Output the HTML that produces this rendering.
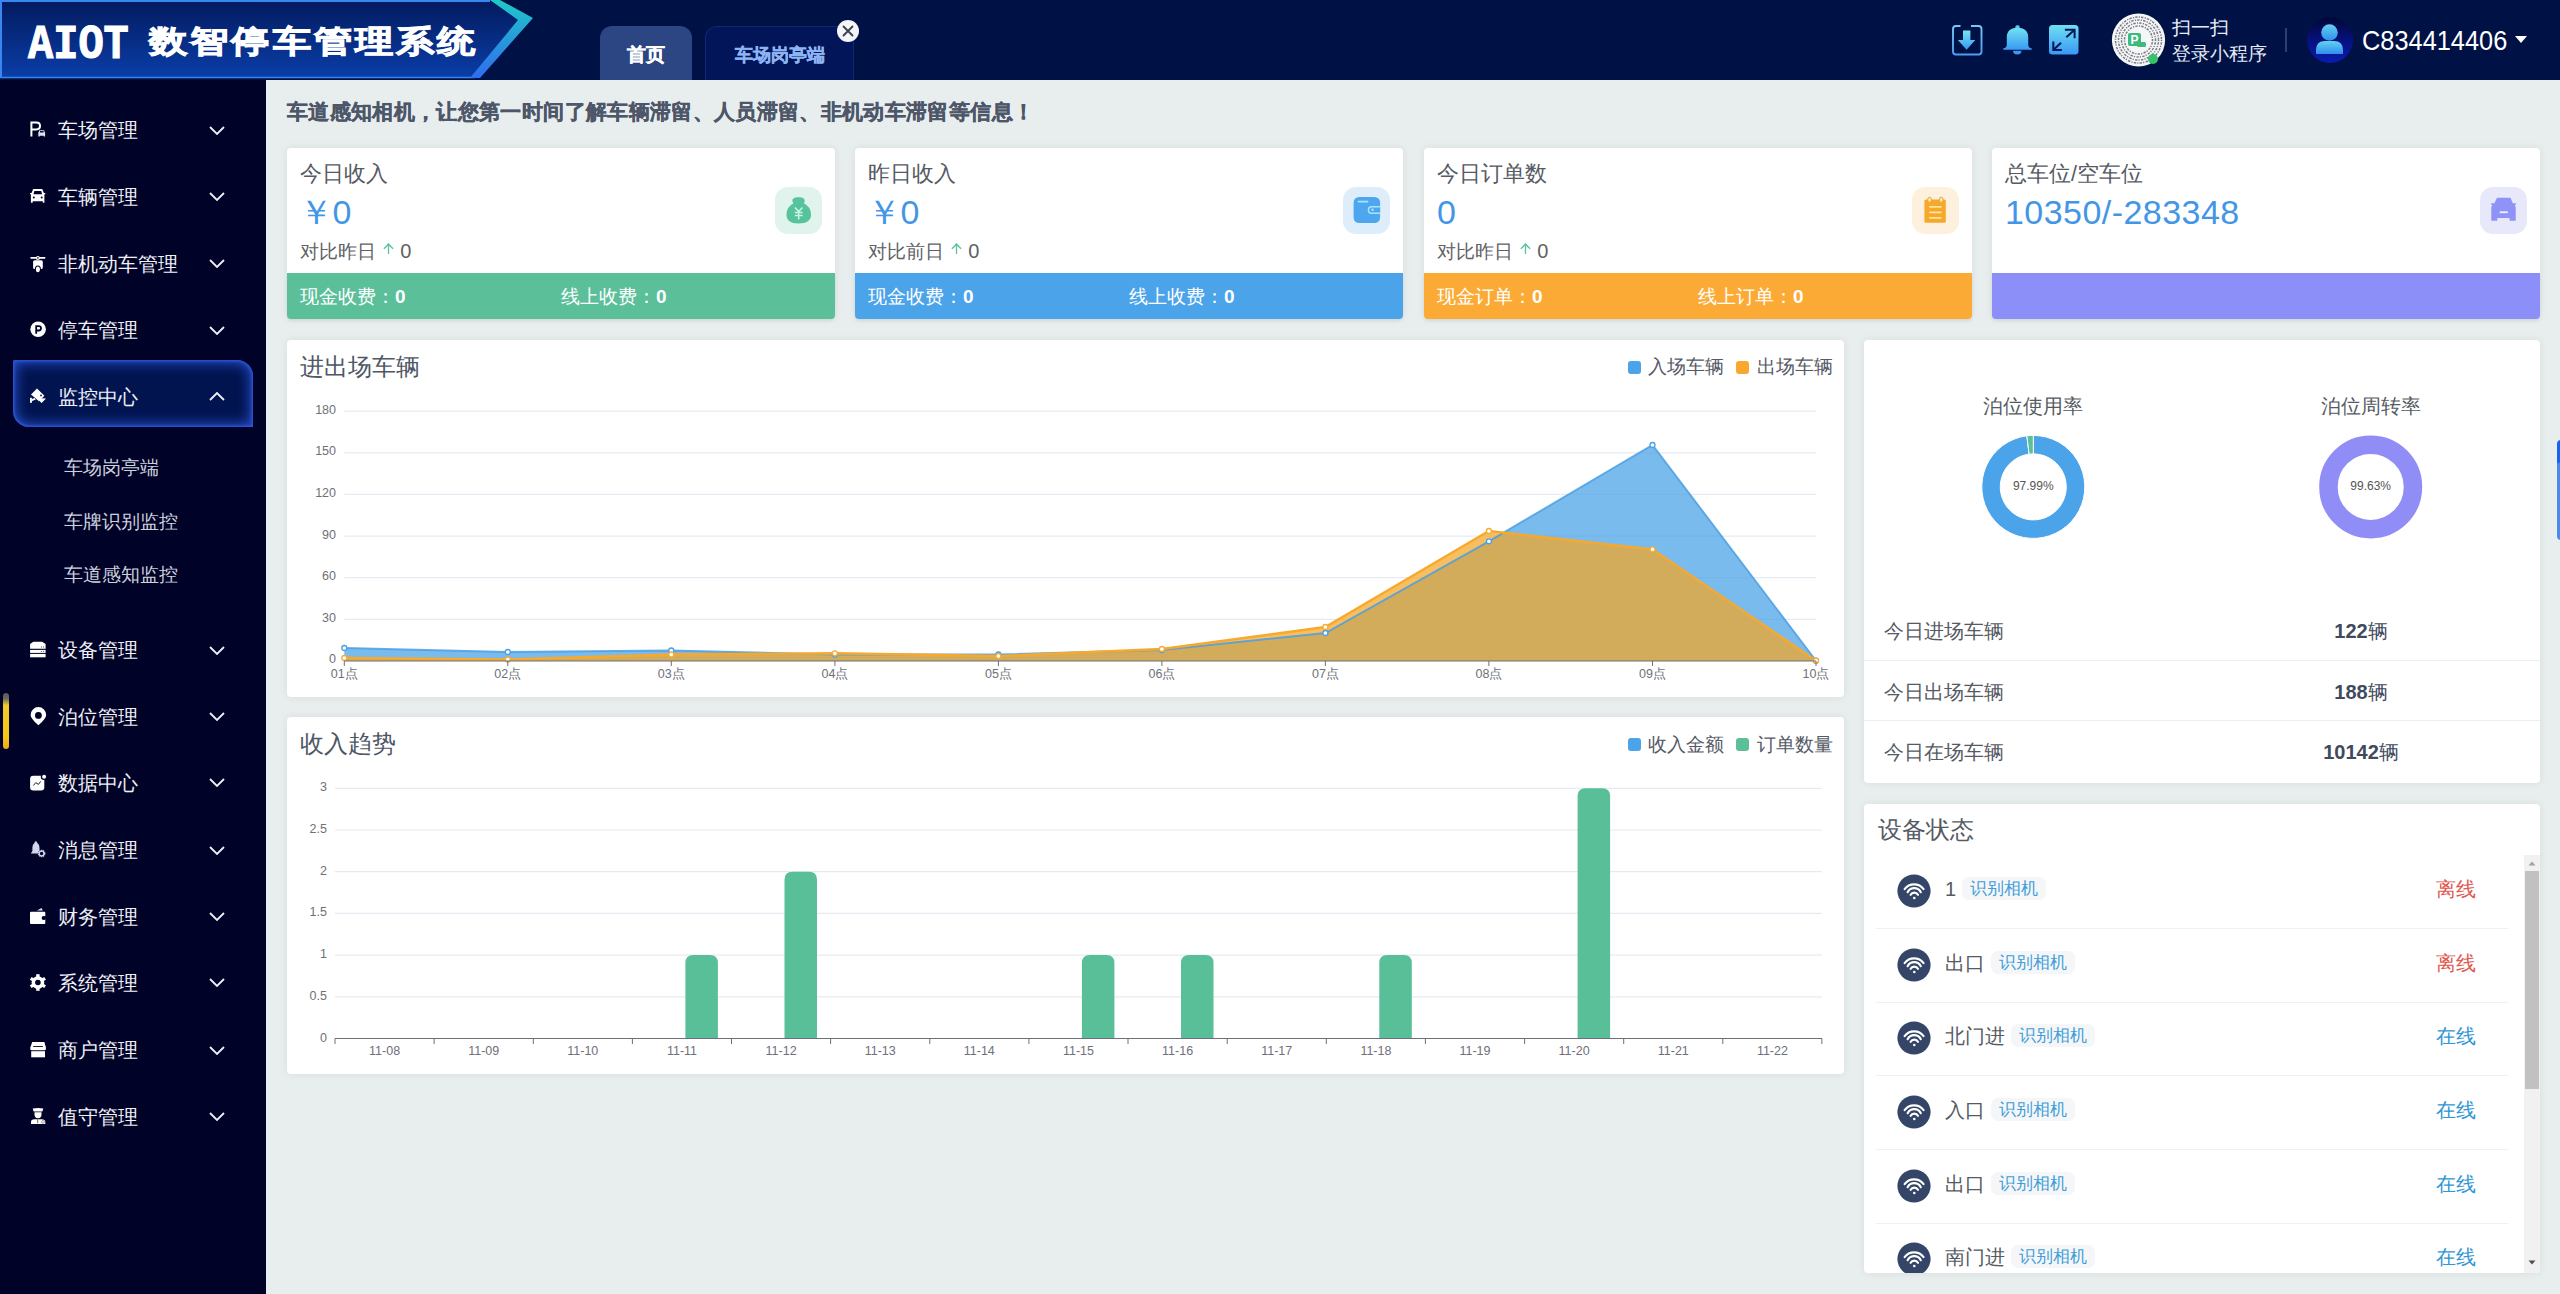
<!DOCTYPE html>
<html><head><meta charset="utf-8">
<style>
*{box-sizing:border-box;margin:0;padding:0}
html,body{width:2560px;height:1294px;overflow:hidden}
body{background:#e8edee;font-family:"Liberation Sans",sans-serif;position:relative;color:#555}
.abs{position:absolute}
#hdr{position:absolute;left:0;top:0;width:2560px;height:80px;background:#001145}
#side{position:absolute;left:0;top:80px;width:266px;height:1214px;background:#000227;box-shadow:1px 0 0 #e4eef6}
.mi{position:absolute;left:0;width:267px;height:40px;color:#eef0f6;font-size:20px;line-height:40px}
.mi .ic{position:absolute;left:30px;top:12px;width:16px;height:16px}
.mi .tx{position:absolute;left:58px;top:0}
.mi .ch{position:absolute;left:209px;top:15px;width:16px;height:9px}
.sub{position:absolute;left:64px;color:#cfd3df;font-size:18.5px;line-height:30px}
.card{position:absolute;background:#fff;border-radius:4px;box-shadow:0 0 8px rgba(0,0,0,.07)}
</style></head><body>
<div id="hdr">
  <svg class="abs" style="left:0;top:0" width="540" height="80" viewBox="0 0 540 80">
    <defs>
      <linearGradient id="lg1" x1="0" y1="0" x2="0" y2="1">
        <stop offset="0" stop-color="#031a5e"/><stop offset="1" stop-color="#0a3ea8"/>
      </linearGradient>
      <linearGradient id="lg2" x1="0" y1="0" x2="0" y2="1">
        <stop offset="0" stop-color="#1fc8c8"/><stop offset="1" stop-color="#2f6cf0"/>
      </linearGradient>
    </defs>
    <polygon points="0,0 492,0 532,18 474,78 0,78" fill="url(#lg1)"/>
    <polyline points="1,78 1,1 490,1" fill="none" stroke="#3a86f0" stroke-width="2"/>
    <line x1="0" y1="77.5" x2="475" y2="77.5" stroke="#3a86f0" stroke-width="1.5"/>
    <polygon points="490,0 500,0 533,18 480,78 470,78 518,20" fill="url(#lg2)"/>
  </svg>
  <div class="abs" style="left:28px;top:18px;color:#fff;font-family:'Liberation Mono',monospace;font-size:42px;font-weight:700;line-height:48px;white-space:nowrap;-webkit-text-stroke:1px #fff;transform:scale(1,1.15);transform-origin:0 0">AIOT</div>
  <div class="abs" style="left:149px;top:22px;color:#fff;font-size:38px;font-weight:900;line-height:48px;letter-spacing:3.2px;white-space:nowrap;-webkit-text-stroke:1.2px #fff;transform:scaleY(0.81);transform-origin:0 0">数智停车管理系统</div>

  <!-- tabs -->
  <div class="abs" style="left:600px;top:26px;width:92px;height:54px;background:#2b4682;border-radius:12px 12px 0 0"></div>
  <div class="abs" style="left:600px;top:26px;width:92px;height:54px;line-height:58px;text-align:center;color:#fff;font-size:18.5px;font-weight:700;-webkit-text-stroke:0.4px #fff">首页</div>
  <div class="abs" style="left:705px;top:26px;width:149px;height:54px;background:#021558;border:1px solid #0c2a78;border-bottom:none;border-radius:12px 12px 0 0"></div>
  <div class="abs" style="left:705px;top:26px;width:149px;height:54px;line-height:58px;text-align:center;color:#8db4f2;font-size:18px;font-weight:700;-webkit-text-stroke:0.3px #8db4f2">车场岗亭端</div>
  <svg class="abs" style="left:836px;top:19px" width="24" height="24" viewBox="0 0 24 24"><circle cx="12" cy="12" r="11" fill="#f4f5f8"/><path d="M7.5 7.5L16.5 16.5M16.5 7.5L7.5 16.5" stroke="#3a3f4a" stroke-width="1.8" stroke-linecap="round"/></svg>
  <!-- right icons -->
  <svg class="abs" style="left:1950px;top:23px" width="34" height="34" viewBox="0 0 34 34">
    <defs><linearGradient id="gi" x1="0" y1="0" x2="0" y2="1"><stop offset="0" stop-color="#72e4f2"/><stop offset="1" stop-color="#3b98f3"/></linearGradient>
    <linearGradient id="gf" x1="0" y1="0" x2="0" y2="1"><stop offset="0" stop-color="#78c8f6"/><stop offset="1" stop-color="#4aa0f0"/></linearGradient></defs>
    <path d="M10.5 3H6Q3 3 3 6V28.5Q3 31.5 6 31.5H28.5Q31.5 31.5 31.5 28.5V6Q31.5 3 28.5 3H21" fill="none" stroke="url(#gf)" stroke-width="1.9"/>
    <path d="M13 7.6H20.4V16.9H25.3L16.6 26.7L7.8 16.9H13Z" fill="url(#gi)"/>
  </svg>
  <svg class="abs" style="left:2003px;top:25px" width="30" height="31" viewBox="0 0 30 31">
    <defs><linearGradient id="gb" x1="0" y1="0" x2="0" y2="1"><stop offset="0" stop-color="#72e2f2"/><stop offset="1" stop-color="#3a98f3"/></linearGradient></defs>
    <circle cx="14.5" cy="2.6" r="2.3" fill="url(#gb)"/>
    <path d="M3.8 12C3.8 5.8 8.3 2.8 14.5 2.8C20.7 2.8 25.2 5.8 25.2 12V19.5Q25.2 23 28.8 23.6V24.8H0.2V23.6Q3.8 23 3.8 19.5Z" fill="url(#gb)"/>
    <path d="M10 25.8H18.5Q18.5 29.4 14.25 29.4Q10 29.4 10 25.8Z" fill="#3a98f3"/>
  </svg>
  <svg class="abs" style="left:2049px;top:25px" width="30" height="30" viewBox="0 0 30 30">
    <defs><linearGradient id="ge" x1="0" y1="0" x2="0" y2="1"><stop offset="0" stop-color="#6ee0f0"/><stop offset="1" stop-color="#3a98f5"/></linearGradient></defs>
    <rect x="0" y="0" width="29.5" height="29.5" rx="3.5" fill="url(#ge)"/>
    <path d="M15.9 4.65H25.6V13.2M25.6 4.65L17.3 12.3M4.3 16.4V25.1H12.9M4.3 25.1L12 17.8" fill="none" stroke="#06185a" stroke-width="2"/>
  </svg>
  <!-- qr -->
  <svg class="abs" style="left:2111px;top:13px" width="55" height="55" viewBox="0 0 55 55">
    <circle cx="27.5" cy="27" r="26.6" fill="#f5f6f8"/>
    <g stroke="#5a5f66" stroke-width="1.5" stroke-dasharray="1.2 1.1 2.4 1.3" fill="none" opacity=".8">
      <circle cx="27.5" cy="27" r="23"/><circle cx="27.5" cy="27" r="20"/><circle cx="27.5" cy="27" r="17"/><circle cx="27.5" cy="27" r="14"/>
    </g>
    <circle cx="27.5" cy="27" r="11" fill="#f5f6f8"/>
    <rect x="17" y="20" width="13" height="13" rx="2" fill="#3fba7f"/>
    <text x="19.5" y="31" font-size="12" font-weight="700" fill="#fff" font-family="Liberation Sans">P</text>
    <rect x="26" y="29" width="9" height="5" rx="1.5" fill="#3fba7f"/>
    <circle cx="42" cy="46" r="5" fill="#36c46a"/>
  </svg>
  <div class="abs" style="left:2172px;top:15px;color:#e6ebf7;font-size:19px;line-height:26px;white-space:nowrap">扫一扫<br>登录小程序</div>
  <div class="abs" style="left:2285px;top:28px;width:2px;height:24px;background:#2f3f6e"></div>
  <svg class="abs" style="left:2307px;top:17px" width="46" height="46" viewBox="0 0 46 46">
    <defs><linearGradient id="ga" x1="0" y1="0" x2="0" y2="1"><stop offset="0" stop-color="#020734"/><stop offset=".55" stop-color="#061283"/><stop offset="1" stop-color="#0a1cae"/></linearGradient>
    <linearGradient id="gp" x1="0" y1="0" x2="0" y2="1"><stop offset="0" stop-color="#64d0ee"/><stop offset="1" stop-color="#2f8ef0"/></linearGradient></defs>
    <circle cx="23" cy="23" r="23" fill="url(#ga)"/>
    <circle cx="22.5" cy="15.5" r="8.3" fill="url(#gp)"/>
    <path d="M9 37V33Q9 24 18 24H27Q36 24 36 33V37Z" fill="url(#gp)"/>
  </svg>
  <div class="abs" style="left:2362px;top:19.5px;color:#fff;font-size:28.5px;line-height:40px;white-space:nowrap;transform:scaleX(0.89);transform-origin:0 0">C834414406</div>
  <svg class="abs" style="left:2514px;top:35px" width="14" height="9" viewBox="0 0 14 9"><path d="M1 1H13L7 8Z" fill="#fff"/></svg>
</div>
<div id="side"></div>
<div class="abs" style="left:13px;top:360px;width:240px;height:67px;background:#021450;border-radius:2px 16px 0 16px;box-shadow:inset 0 0 14px 2px #2a55d8, inset 0 0 3px 1px #3a66e8"></div>
<svg class="abs" style="left:24px;top:118px" width="30" height="24" viewBox="0 0 30 24"><path d="M7.4 18.5V4.6H12.3Q16 4.6 16 8Q16 11.4 12.3 11.4H7.4" fill="none" stroke="#fff" stroke-width="2"/><path d="M15.4 12.2H19.9L21.1 14.6V18.5H19.7V17.7H15.8V18.5H14.3V14.6Z" fill="#dfe2f2"/><rect x="16" y="13.1" width="3.6" height="1.4" fill="#000227"/></svg>
<div class="abs" style="left:58px;top:115px;height:30px;line-height:30px;font-size:20px;color:#eef0f6;white-space:nowrap">车场管理</div>
<svg class="abs" style="left:209px;top:126px" width="16" height="9" viewBox="0 0 16 9"><path d="M1 1L8 8L15 1" fill="none" stroke="#eef0f6" stroke-width="1.8"/></svg>
<svg class="abs" style="left:24px;top:185px" width="30" height="24" viewBox="0 0 30 24"><path d="M9.2 3.9H18.2L19.9 7.9H21.3V9.2H20.4V17.8H18.8V16.2H8.7V17.8H6.9V9.2H6.1V7.9H7.5Z" fill="#fff"/><path d="M10.4 6.1H17.2L18.1 9.2H9.5Z" fill="#000227"/><circle cx="9.8" cy="12.4" r="1" fill="#000227"/><circle cx="17.7" cy="12.4" r="1" fill="#000227"/></svg>
<div class="abs" style="left:58px;top:182px;height:30px;line-height:30px;font-size:20px;color:#eef0f6;white-space:nowrap">车辆管理</div>
<svg class="abs" style="left:209px;top:192px" width="16" height="9" viewBox="0 0 16 9"><path d="M1 1L8 8L15 1" fill="none" stroke="#eef0f6" stroke-width="1.8"/></svg>
<svg class="abs" style="left:24px;top:251.5px" width="30" height="24" viewBox="0 0 30 24"><rect x="6.3" y="4.9" width="15.2" height="1.8" rx=".9" fill="#fff"/><circle cx="13.9" cy="5.9" r="2" fill="#fff"/><circle cx="13.9" cy="5.9" r=".8" fill="#000227"/><rect x="9.1" y="8.2" width="9.7" height="8.8" rx="1.6" fill="#fff"/><ellipse cx="13.9" cy="17" rx="3" ry="3.6" fill="#000227"/><ellipse cx="13.9" cy="17.3" rx="2" ry="2.9" fill="#fff"/></svg>
<div class="abs" style="left:58px;top:248.5px;height:30px;line-height:30px;font-size:20px;color:#eef0f6;white-space:nowrap">非机动车管理</div>
<svg class="abs" style="left:209px;top:259px" width="16" height="9" viewBox="0 0 16 9"><path d="M1 1L8 8L15 1" fill="none" stroke="#eef0f6" stroke-width="1.8"/></svg>
<svg class="abs" style="left:24px;top:318px" width="30" height="24" viewBox="0 0 30 24"><circle cx="14.1" cy="11.3" r="7.8" fill="#fff"/><path d="M12.2 15.7V8.1H14.8Q17 8.1 17 10.3Q17 12.5 14.8 12.5H12.2" fill="none" stroke="#000227" stroke-width="1.8"/></svg>
<div class="abs" style="left:58px;top:315px;height:30px;line-height:30px;font-size:20px;color:#eef0f6;white-space:nowrap">停车管理</div>
<svg class="abs" style="left:209px;top:326px" width="16" height="9" viewBox="0 0 16 9"><path d="M1 1L8 8L15 1" fill="none" stroke="#eef0f6" stroke-width="1.8"/></svg>
<svg class="abs" style="left:24px;top:385px" width="30" height="24" viewBox="0 0 30 24"><path d="M13 3.4L20.4 10.7L15 16.2L7 9.6Z" fill="#fff"/><path d="M16.6 13.2L22 13.5L17.6 18L15 15.6Z" fill="#fff"/><rect x="6" y="12.8" width="1.9" height="5" fill="#fff"/><path d="M7.5 14.3L10.4 12.9L11.8 14.6L7.5 16.2Z" fill="#fff"/><circle cx="17" cy="10.4" r=".9" fill="#041652"/></svg>
<div class="abs" style="left:58px;top:382px;height:30px;line-height:30px;font-size:20px;color:#eef0f6;white-space:nowrap">监控中心</div>
<svg class="abs" style="left:209px;top:392px" width="16" height="9" viewBox="0 0 16 9"><path d="M1 8L8 1L15 8" fill="none" stroke="#eef0f6" stroke-width="1.8"/></svg>
<svg class="abs" style="left:24px;top:638px" width="30" height="24" viewBox="0 0 30 24"><path d="M9.3 3.7H18.1L21.6 5.9V10.7H6.1V5.9Z" fill="#fff"/><rect x="6.1" y="11.9" width="15.5" height="3" fill="#fff"/><rect x="6.1" y="15.9" width="15.5" height="3.4" fill="#fff"/><rect x="17" y="8" width=".8" height="2" fill="#999"/><rect x="19" y="8" width=".8" height="2" fill="#999"/><circle cx="17.4" cy="13.4" r=".5" fill="#333"/><circle cx="19.5" cy="13.4" r=".5" fill="#333"/></svg>
<div class="abs" style="left:58px;top:635px;height:30px;line-height:30px;font-size:20px;color:#eef0f6;white-space:nowrap">设备管理</div>
<svg class="abs" style="left:209px;top:646px" width="16" height="9" viewBox="0 0 16 9"><path d="M1 1L8 8L15 1" fill="none" stroke="#eef0f6" stroke-width="1.8"/></svg>
<svg class="abs" style="left:24px;top:705px" width="30" height="24" viewBox="0 0 30 24"><path d="M14.4 20.3Q6.6 13.4 6.6 9.9A7.8 7.8 0 0 1 22.2 9.9Q22.2 13.4 14.4 20.3Z" fill="#fff"/><circle cx="14.4" cy="10.4" r="3.4" fill="#000227"/></svg>
<div class="abs" style="left:58px;top:702px;height:30px;line-height:30px;font-size:20px;color:#eef0f6;white-space:nowrap">泊位管理</div>
<svg class="abs" style="left:209px;top:712px" width="16" height="9" viewBox="0 0 16 9"><path d="M1 1L8 8L15 1" fill="none" stroke="#eef0f6" stroke-width="1.8"/></svg>
<svg class="abs" style="left:24px;top:771px" width="30" height="24" viewBox="0 0 30 24"><rect x="6.1" y="4.8" width="14.2" height="14.6" rx="3.2" fill="#fff"/><circle cx="20.1" cy="5.8" r="3.3" fill="#000227"/><circle cx="20.1" cy="5.8" r="2" fill="#fff"/><path d="M9.4 14.5L11.8 11.6L14.4 13.4L16.7 10.4" fill="none" stroke="#222" stroke-width="1"/></svg>
<div class="abs" style="left:58px;top:768px;height:30px;line-height:30px;font-size:20px;color:#eef0f6;white-space:nowrap">数据中心</div>
<svg class="abs" style="left:209px;top:778px" width="16" height="9" viewBox="0 0 16 9"><path d="M1 1L8 8L15 1" fill="none" stroke="#eef0f6" stroke-width="1.8"/></svg>
<svg class="abs" style="left:24px;top:838px" width="30" height="24" viewBox="0 0 30 24"><path d="M11.8 3.2Q13.2 3.2 13.2 5Q15.5 6 15.5 10.5V13L16.6 15.6H6.8L8.4 13V9.5Q8.4 6 10.5 5Q10.5 3.2 11.8 3.2Z" fill="#d2d5ee"/><circle cx="17.6" cy="15.5" r="3.6" fill="#000227"/><circle cx="17.6" cy="15.5" r="3" fill="none" stroke="#d2d5ee" stroke-width="1.6" stroke-dasharray="1.3 .6"/><circle cx="17.6" cy="15.5" r="2.3" fill="none" stroke="#d2d5ee" stroke-width="1.2"/></svg>
<div class="abs" style="left:58px;top:835px;height:30px;line-height:30px;font-size:20px;color:#eef0f6;white-space:nowrap">消息管理</div>
<svg class="abs" style="left:209px;top:846px" width="16" height="9" viewBox="0 0 16 9"><path d="M1 1L8 8L15 1" fill="none" stroke="#eef0f6" stroke-width="1.8"/></svg>
<svg class="abs" style="left:24px;top:904.5px" width="30" height="24" viewBox="0 0 30 24"><rect x="6" y="6.7" width="15.3" height="12.3" rx="1" fill="#fff"/><circle cx="19.6" cy="12.9" r="2" fill="#000227"/><rect x="19.6" y="11.3" width="2.2" height="3.2" fill="#000227"/><path d="M13 5.6L17.5 3L18.8 5.6Z" fill="#dcdff5"/></svg>
<div class="abs" style="left:58px;top:901.5px;height:30px;line-height:30px;font-size:20px;color:#eef0f6;white-space:nowrap">财务管理</div>
<svg class="abs" style="left:209px;top:912px" width="16" height="9" viewBox="0 0 16 9"><path d="M1 1L8 8L15 1" fill="none" stroke="#eef0f6" stroke-width="1.8"/></svg>
<svg class="abs" style="left:24px;top:971px" width="30" height="24" viewBox="0 0 30 24"><g fill="#fff"><circle cx="13.9" cy="11.5" r="6.3"/><rect x="12.2" y="3.2" width="3.4" height="16.6"/><rect x="12.2" y="3.2" width="3.4" height="16.6" transform="rotate(60 13.9 11.5)"/><rect x="12.2" y="3.2" width="3.4" height="16.6" transform="rotate(120 13.9 11.5)"/></g><circle cx="13.9" cy="11.5" r="2.8" fill="#000227"/></svg>
<div class="abs" style="left:58px;top:968px;height:30px;line-height:30px;font-size:20px;color:#eef0f6;white-space:nowrap">系统管理</div>
<svg class="abs" style="left:209px;top:978px" width="16" height="9" viewBox="0 0 16 9"><path d="M1 1L8 8L15 1" fill="none" stroke="#eef0f6" stroke-width="1.8"/></svg>
<svg class="abs" style="left:24px;top:1038px" width="30" height="24" viewBox="0 0 30 24"><path d="M8.2 4H20.4L21.9 9.5V11.2Q21.9 12.3 20.4 12.3H7.8Q6.3 12.3 6.3 11.2V9.5Z" fill="#fff"/><rect x="9" y="8.1" width="10" height="1" rx=".5" fill="#222"/><rect x="7.2" y="13.2" width="13.8" height="6.1" fill="#fff"/></svg>
<div class="abs" style="left:58px;top:1035px;height:30px;line-height:30px;font-size:20px;color:#eef0f6;white-space:nowrap">商户管理</div>
<svg class="abs" style="left:209px;top:1046px" width="16" height="9" viewBox="0 0 16 9"><path d="M1 1L8 8L15 1" fill="none" stroke="#eef0f6" stroke-width="1.8"/></svg>
<svg class="abs" style="left:24px;top:1105px" width="30" height="24" viewBox="0 0 30 24"><path d="M8.7 3.6Q14 2.4 19.3 3.6L18.4 6.6H9.6Z" fill="#fff"/><path d="M10.5 7.2H17.5V9.5Q17.5 13.2 14 13.2Q10.5 13.2 10.5 9.5Z" fill="#fff"/><path d="M7 19V17Q7 14.2 10.5 14.2H17.5Q21.3 14.2 21.3 17V19Z" fill="#fff"/><rect x="13.3" y="14.2" width=".9" height="4" fill="#555"/><circle cx="19" cy="16.9" r="1.4" fill="none" stroke="#666" stroke-width=".6"/></svg>
<div class="abs" style="left:58px;top:1102px;height:30px;line-height:30px;font-size:20px;color:#eef0f6;white-space:nowrap">值守管理</div>
<svg class="abs" style="left:209px;top:1112px" width="16" height="9" viewBox="0 0 16 9"><path d="M1 1L8 8L15 1" fill="none" stroke="#eef0f6" stroke-width="1.8"/></svg>
<div class="abs" style="left:64px;top:453px;height:30px;line-height:30px;font-size:18.5px;color:#cdd1de;white-space:nowrap">车场岗亭端</div>
<div class="abs" style="left:64px;top:507px;height:30px;line-height:30px;font-size:18.5px;color:#cdd1de;white-space:nowrap">车牌识别监控</div>
<div class="abs" style="left:64px;top:560px;height:30px;line-height:30px;font-size:18.5px;color:#cdd1de;white-space:nowrap">车道感知监控</div>
<div class="abs" style="left:3px;top:693px;width:6px;height:56px;border-radius:3px;background:linear-gradient(#55585f 0,#6a6a60 10%,#f3c92a 22%,#f5c518 80%,#f0a820 100%)"></div>
<div class="abs" style="left:287px;top:97px;height:30px;line-height:30px;font-size:21px;font-weight:700;color:#4d5769;letter-spacing:0.35px;-webkit-text-stroke:0.35px #4d5769;white-space:nowrap">车道感知相机，让您第一时间了解车辆滞留、人员滞留、非机动车滞留等信息！</div>
<div class="card" style="left:287px;top:148px;width:548px;height:171px"></div>
<div class="abs" style="left:300px;top:159px;line-height:30px;font-size:21.5px;color:#555a63;white-space:nowrap">今日收入</div>
<div class="abs" style="left:298.5px;top:190px;line-height:44px;font-size:34px;color:#4396e6;white-space:nowrap">￥0</div>
<div class="abs" style="left:300px;top:237px;line-height:28px;font-size:18.5px;color:#606266;white-space:nowrap">对比昨日 <svg width="11" height="12" viewBox="0 0 11 12" style="vertical-align:3px;margin:0 1px 0 2px"><path d="M5.5 11V2" stroke="#5cc49c" stroke-width="1.3"/><path d="M0.8 5.8Q3.5 3.5 5.5 1Q7.5 3.5 10.2 5.8" fill="none" stroke="#5cc49c" stroke-width="1.4"/></svg> <span style="font-size:20px">0</span></div>
<div class="abs" style="left:287px;top:273px;width:548px;height:46px;background:#5bbf9a;border-radius:0 0 4px 4px;box-shadow:0 2px 3px rgba(0,0,0,.06)"></div>
<div class="abs" style="left:300px;top:282px;line-height:30px;font-size:19px;color:#fff;white-space:nowrap">现金收费：<b>0</b></div>
<div class="abs" style="left:561px;top:282px;line-height:30px;font-size:19px;color:#fff;white-space:nowrap">线上收费：<b>0</b></div>
<svg class="abs" style="left:775px;top:187px" width="47" height="47" viewBox="0 0 47 47"><rect x="0" y="0" width="47" height="47" rx="13" fill="#e0f3ec"/><path d="M17.5 12.5Q19 9.8 23.5 10.3Q28 9.8 29.5 12.5Q30.5 14.5 28.8 16.3Q36 20 36 27.5Q36 36.5 23.5 36.5Q11.5 36.5 11.5 27.5Q11.5 20 18.5 16.3Q16.8 14.5 17.5 12.5Z" fill="#56c39c"/><path d="M20 20.5L23.7 24.6L27.4 20.5M19.8 25.5H27.6M19.8 28.5H27.6M23.7 24.6V32.5" fill="none" stroke="#c8f7e6" stroke-width="1.5"/></svg>
<div class="card" style="left:855px;top:148px;width:548px;height:171px"></div>
<div class="abs" style="left:868px;top:159px;line-height:30px;font-size:21.5px;color:#555a63;white-space:nowrap">昨日收入</div>
<div class="abs" style="left:866.5px;top:190px;line-height:44px;font-size:34px;color:#4396e6;white-space:nowrap">￥0</div>
<div class="abs" style="left:868px;top:237px;line-height:28px;font-size:18.5px;color:#606266;white-space:nowrap">对比前日 <svg width="11" height="12" viewBox="0 0 11 12" style="vertical-align:3px;margin:0 1px 0 2px"><path d="M5.5 11V2" stroke="#5cc49c" stroke-width="1.3"/><path d="M0.8 5.8Q3.5 3.5 5.5 1Q7.5 3.5 10.2 5.8" fill="none" stroke="#5cc49c" stroke-width="1.4"/></svg> <span style="font-size:20px">0</span></div>
<div class="abs" style="left:855px;top:273px;width:548px;height:46px;background:#4ba3ea;border-radius:0 0 4px 4px;box-shadow:0 2px 3px rgba(0,0,0,.06)"></div>
<div class="abs" style="left:868px;top:282px;line-height:30px;font-size:19px;color:#fff;white-space:nowrap">现金收费：<b>0</b></div>
<div class="abs" style="left:1129px;top:282px;line-height:30px;font-size:19px;color:#fff;white-space:nowrap">线上收费：<b>0</b></div>
<svg class="abs" style="left:1343px;top:187px" width="47" height="47" viewBox="0 0 47 47"><rect x="0" y="0" width="47" height="47" rx="13" fill="#ddeefa"/><rect x="10.6" y="10" width="26.5" height="26" rx="5.5" fill="#4ea6ee"/><rect x="14.6" y="13.8" width="10.8" height="1.6" rx=".8" fill="#a9e4ff"/><path d="M37.1 19.7H28.4Q25.4 19.7 25.4 22.95Q25.4 26.2 28.4 26.2H37.1" fill="#4ea6ee" stroke="#a9e4ff" stroke-width="1.4"/><circle cx="29.5" cy="22.8" r="1.2" fill="#a9e4ff"/></svg>
<div class="card" style="left:1424px;top:148px;width:548px;height:171px"></div>
<div class="abs" style="left:1437px;top:159px;line-height:30px;font-size:21.5px;color:#555a63;white-space:nowrap">今日订单数</div>
<div class="abs" style="left:1437px;top:190px;line-height:44px;font-size:34px;color:#4396e6;white-space:nowrap">0</div>
<div class="abs" style="left:1437px;top:237px;line-height:28px;font-size:18.5px;color:#606266;white-space:nowrap">对比昨日 <svg width="11" height="12" viewBox="0 0 11 12" style="vertical-align:3px;margin:0 1px 0 2px"><path d="M5.5 11V2" stroke="#5cc49c" stroke-width="1.3"/><path d="M0.8 5.8Q3.5 3.5 5.5 1Q7.5 3.5 10.2 5.8" fill="none" stroke="#5cc49c" stroke-width="1.4"/></svg> <span style="font-size:20px">0</span></div>
<div class="abs" style="left:1424px;top:273px;width:548px;height:46px;background:#fbab35;border-radius:0 0 4px 4px;box-shadow:0 2px 3px rgba(0,0,0,.06)"></div>
<div class="abs" style="left:1437px;top:282px;line-height:30px;font-size:19px;color:#fff;white-space:nowrap">现金订单：<b>0</b></div>
<div class="abs" style="left:1698px;top:282px;line-height:30px;font-size:19px;color:#fff;white-space:nowrap">线上订单：<b>0</b></div>
<svg class="abs" style="left:1912px;top:187px" width="47" height="47" viewBox="0 0 47 47"><rect x="0" y="0" width="47" height="47" rx="13" fill="#fdf0dc"/><rect x="12.4" y="12.5" width="21.4" height="23.2" rx="1.5" fill="#f6a82c"/><ellipse cx="17.6" cy="12.8" rx="2" ry="2.6" fill="#fbe6a6" stroke="#e9a23a" stroke-width=".9"/><ellipse cx="29.2" cy="12.8" rx="2" ry="2.6" fill="#fbe6a6" stroke="#e9a23a" stroke-width=".9"/><rect x="17" y="19" width="12.7" height="1.7" rx=".85" fill="#ffe49a"/><rect x="17" y="24.6" width="12.7" height="1.7" rx=".85" fill="#ffe49a"/><rect x="17" y="30" width="12.7" height="1.7" rx=".85" fill="#ffe49a"/></svg>
<div class="card" style="left:1992px;top:148px;width:548px;height:171px"></div>
<div class="abs" style="left:2005px;top:159px;line-height:30px;font-size:21.5px;color:#555a63;white-space:nowrap">总车位/空车位</div>
<div class="abs" style="left:2005px;top:190px;line-height:44px;font-size:34px;color:#4396e6;letter-spacing:0.45px;white-space:nowrap">10350/-283348</div>
<div class="abs" style="left:1992px;top:273px;width:548px;height:46px;background:#8b8ff7;border-radius:0 0 4px 4px;box-shadow:0 2px 3px rgba(0,0,0,.06)"></div>
<svg class="abs" style="left:2480px;top:187px" width="47" height="47" viewBox="0 0 47 47"><rect x="0" y="0" width="47" height="47" rx="13" fill="#e8e8fb"/><path d="M17 10.8H30.5L32.8 16.3H35.8V18H34.6L35.7 20V33.8H29.6V31H17.3V33.8H11.3V20L12.4 18H11.2V16.3H14.4Z" fill="#8f92f7"/><rect x="19.7" y="24.3" width="8.1" height="1.9" fill="#eef0ff"/></svg>
<div class="card" style="left:287px;top:340px;width:1557px;height:357px"></div>
<div class="abs" style="left:300px;top:350px;line-height:34px;font-size:24px;color:#4e5766;white-space:nowrap">进出场车辆</div>
<div class="abs" style="left:1628px;top:360.8px;width:13px;height:13px;border-radius:3px;background:#4ba3ea"></div>
<div class="abs" style="left:1648px;top:354.3px;line-height:26px;font-size:19px;color:#555a66;white-space:nowrap">入场车辆</div>
<div class="abs" style="left:1736px;top:360.8px;width:13px;height:13px;border-radius:3px;background:#f9a82f"></div>
<div class="abs" style="left:1757px;top:354.3px;line-height:26px;font-size:19px;color:#555a66;white-space:nowrap">出场车辆</div>
<svg class="abs" style="left:287px;top:340px" width="1557" height="357" viewBox="287 340 1557 357"><line x1="344.3" y1="411.2" x2="1816" y2="411.2" stroke="#e6eaf2" stroke-width="1.2"/><text x="336" y="413.7" text-anchor="end" font-size="12.5" fill="#6e7079" font-family="Liberation Sans">180</text><line x1="344.3" y1="452.8" x2="1816" y2="452.8" stroke="#e6eaf2" stroke-width="1.2"/><text x="336" y="455.3" text-anchor="end" font-size="12.5" fill="#6e7079" font-family="Liberation Sans">150</text><line x1="344.3" y1="494.4" x2="1816" y2="494.4" stroke="#e6eaf2" stroke-width="1.2"/><text x="336" y="496.9" text-anchor="end" font-size="12.5" fill="#6e7079" font-family="Liberation Sans">120</text><line x1="344.3" y1="536.1" x2="1816" y2="536.1" stroke="#e6eaf2" stroke-width="1.2"/><text x="336" y="538.6" text-anchor="end" font-size="12.5" fill="#6e7079" font-family="Liberation Sans">90</text><line x1="344.3" y1="577.7" x2="1816" y2="577.7" stroke="#e6eaf2" stroke-width="1.2"/><text x="336" y="580.2" text-anchor="end" font-size="12.5" fill="#6e7079" font-family="Liberation Sans">60</text><line x1="344.3" y1="619.3" x2="1816" y2="619.3" stroke="#e6eaf2" stroke-width="1.2"/><text x="336" y="621.8" text-anchor="end" font-size="12.5" fill="#6e7079" font-family="Liberation Sans">30</text><text x="336" y="663.4" text-anchor="end" font-size="12.5" fill="#6e7079" font-family="Liberation Sans">0</text><path d="M344.3,660.9 L344.3,648.0 507.8,652.0 671.3,650.5 834.9,654.5 998.4,654.5 1161.9,650.0 1325.4,633.0 1488.9,541.3 1652.5,445.0 1816.0,660.7 L1816.0,660.9 Z" fill="#4ea4e8" fill-opacity=".75"/><path d="M344.3,660.9 L344.3,658.0 507.8,659.5 671.3,654.5 834.9,653.3 998.4,656.0 1161.9,649.0 1325.4,627.0 1488.9,531.0 1652.5,549.3 1816.0,660.7 L1816.0,660.9 Z" fill="#f5a623" fill-opacity=".72"/><path d="M344.3,648.0 507.8,652.0 671.3,650.5 834.9,654.5 998.4,654.5 1161.9,650.0 1325.4,633.0 1488.9,541.3 1652.5,445.0 1816.0,660.7" fill="none" stroke="#4a9fe3" stroke-width="1.9" stroke-opacity=".85"/><path d="M344.3,658.0 507.8,659.5 671.3,654.5 834.9,653.3 998.4,656.0 1161.9,649.0 1325.4,627.0 1488.9,531.0 1652.5,549.3 1816.0,660.7" fill="none" stroke="#f7a92e" stroke-width="2.4"/><circle cx="344.3" cy="648.0" r="2.5" fill="#fff" stroke="#4a9fe3" stroke-width="1.3"/><circle cx="507.8" cy="652.0" r="2.5" fill="#fff" stroke="#4a9fe3" stroke-width="1.3"/><circle cx="671.3" cy="650.5" r="2.5" fill="#fff" stroke="#4a9fe3" stroke-width="1.3"/><circle cx="834.9" cy="654.5" r="2.5" fill="#fff" stroke="#4a9fe3" stroke-width="1.3"/><circle cx="998.4" cy="654.5" r="2.5" fill="#fff" stroke="#4a9fe3" stroke-width="1.3"/><circle cx="1161.9" cy="650.0" r="2.5" fill="#fff" stroke="#4a9fe3" stroke-width="1.3"/><circle cx="1325.4" cy="633.0" r="2.5" fill="#fff" stroke="#4a9fe3" stroke-width="1.3"/><circle cx="1488.9" cy="541.3" r="2.5" fill="#fff" stroke="#4a9fe3" stroke-width="1.3"/><circle cx="1652.5" cy="445.0" r="2.5" fill="#fff" stroke="#4a9fe3" stroke-width="1.3"/><circle cx="1816.0" cy="660.7" r="2.5" fill="#fff" stroke="#4a9fe3" stroke-width="1.3"/><circle cx="344.3" cy="658.0" r="2.5" fill="#fff" stroke="#f7ab33" stroke-width="1.3"/><circle cx="507.8" cy="659.5" r="2.5" fill="#fff" stroke="#f7ab33" stroke-width="1.3"/><circle cx="671.3" cy="654.5" r="2.5" fill="#fff" stroke="#f7ab33" stroke-width="1.3"/><circle cx="834.9" cy="653.3" r="2.5" fill="#fff" stroke="#f7ab33" stroke-width="1.3"/><circle cx="998.4" cy="656.0" r="2.5" fill="#fff" stroke="#f7ab33" stroke-width="1.3"/><circle cx="1161.9" cy="649.0" r="2.5" fill="#fff" stroke="#f7ab33" stroke-width="1.3"/><circle cx="1325.4" cy="627.0" r="2.5" fill="#fff" stroke="#f7ab33" stroke-width="1.3"/><circle cx="1488.9" cy="531.0" r="2.5" fill="#fff" stroke="#f7ab33" stroke-width="1.3"/><circle cx="1652.5" cy="549.3" r="2.5" fill="#fff" stroke="#f7ab33" stroke-width="1.3"/><circle cx="1816.0" cy="660.7" r="2.5" fill="#fff" stroke="#f7ab33" stroke-width="1.3"/><line x1="344.3" y1="661" x2="1816" y2="661" stroke="#6e7079" stroke-width="1.2"/><line x1="344.3" y1="661" x2="344.3" y2="666" stroke="#6e7079" stroke-width="1"/><text x="344.3" y="677.5" text-anchor="middle" font-size="12.5" fill="#6e7079" font-family="Liberation Sans">01点</text><line x1="507.8" y1="661" x2="507.8" y2="666" stroke="#6e7079" stroke-width="1"/><text x="507.8" y="677.5" text-anchor="middle" font-size="12.5" fill="#6e7079" font-family="Liberation Sans">02点</text><line x1="671.3" y1="661" x2="671.3" y2="666" stroke="#6e7079" stroke-width="1"/><text x="671.3" y="677.5" text-anchor="middle" font-size="12.5" fill="#6e7079" font-family="Liberation Sans">03点</text><line x1="834.9" y1="661" x2="834.9" y2="666" stroke="#6e7079" stroke-width="1"/><text x="834.9" y="677.5" text-anchor="middle" font-size="12.5" fill="#6e7079" font-family="Liberation Sans">04点</text><line x1="998.4" y1="661" x2="998.4" y2="666" stroke="#6e7079" stroke-width="1"/><text x="998.4" y="677.5" text-anchor="middle" font-size="12.5" fill="#6e7079" font-family="Liberation Sans">05点</text><line x1="1161.9" y1="661" x2="1161.9" y2="666" stroke="#6e7079" stroke-width="1"/><text x="1161.9" y="677.5" text-anchor="middle" font-size="12.5" fill="#6e7079" font-family="Liberation Sans">06点</text><line x1="1325.4" y1="661" x2="1325.4" y2="666" stroke="#6e7079" stroke-width="1"/><text x="1325.4" y="677.5" text-anchor="middle" font-size="12.5" fill="#6e7079" font-family="Liberation Sans">07点</text><line x1="1488.9" y1="661" x2="1488.9" y2="666" stroke="#6e7079" stroke-width="1"/><text x="1488.9" y="677.5" text-anchor="middle" font-size="12.5" fill="#6e7079" font-family="Liberation Sans">08点</text><line x1="1652.5" y1="661" x2="1652.5" y2="666" stroke="#6e7079" stroke-width="1"/><text x="1652.5" y="677.5" text-anchor="middle" font-size="12.5" fill="#6e7079" font-family="Liberation Sans">09点</text><line x1="1816.0" y1="661" x2="1816.0" y2="666" stroke="#6e7079" stroke-width="1"/><text x="1816.0" y="677.5" text-anchor="middle" font-size="12.5" fill="#6e7079" font-family="Liberation Sans">10点</text></svg>
<div class="card" style="left:287px;top:717px;width:1557px;height:357px"></div>
<div class="abs" style="left:300px;top:727px;line-height:34px;font-size:24px;color:#4e5766;white-space:nowrap">收入趋势</div>
<div class="abs" style="left:1628px;top:738.1px;width:13px;height:13px;border-radius:3px;background:#4ba3ea"></div>
<div class="abs" style="left:1648px;top:731.6px;line-height:26px;font-size:19px;color:#555a66;white-space:nowrap">收入金额</div>
<div class="abs" style="left:1736px;top:738.1px;width:13px;height:13px;border-radius:3px;background:#5bbf98"></div>
<div class="abs" style="left:1757px;top:731.6px;line-height:26px;font-size:19px;color:#555a66;white-space:nowrap">订单数量</div>
<svg class="abs" style="left:287px;top:717px" width="1557" height="357" viewBox="287 717 1557 357"><line x1="335" y1="788.3" x2="1822" y2="788.3" stroke="#e6eaf2" stroke-width="1.2"/><text x="327" y="791.3" text-anchor="end" font-size="12.5" fill="#6e7079" font-family="Liberation Sans">3</text><line x1="335" y1="830.0" x2="1822" y2="830.0" stroke="#e6eaf2" stroke-width="1.2"/><text x="327" y="833.0" text-anchor="end" font-size="12.5" fill="#6e7079" font-family="Liberation Sans">2.5</text><line x1="335" y1="871.7" x2="1822" y2="871.7" stroke="#e6eaf2" stroke-width="1.2"/><text x="327" y="874.7" text-anchor="end" font-size="12.5" fill="#6e7079" font-family="Liberation Sans">2</text><line x1="335" y1="913.4" x2="1822" y2="913.4" stroke="#e6eaf2" stroke-width="1.2"/><text x="327" y="916.4" text-anchor="end" font-size="12.5" fill="#6e7079" font-family="Liberation Sans">1.5</text><line x1="335" y1="955.1" x2="1822" y2="955.1" stroke="#e6eaf2" stroke-width="1.2"/><text x="327" y="958.1" text-anchor="end" font-size="12.5" fill="#6e7079" font-family="Liberation Sans">1</text><line x1="335" y1="996.8" x2="1822" y2="996.8" stroke="#e6eaf2" stroke-width="1.2"/><text x="327" y="999.8" text-anchor="end" font-size="12.5" fill="#6e7079" font-family="Liberation Sans">0.5</text><text x="327" y="1041.5" text-anchor="end" font-size="12.5" fill="#6e7079" font-family="Liberation Sans">0</text><path d="M685.4,1038.5 V963.1 Q685.4,955.1 693.4,955.1 H709.9 Q717.9,955.1 717.9,963.1 V1038.5 Z" fill="#58bf99"/><path d="M784.5,1038.5 V879.7 Q784.5,871.7 792.5,871.7 H809.0 Q817.0,871.7 817.0,879.7 V1038.5 Z" fill="#58bf99"/><path d="M1081.9,1038.5 V963.1 Q1081.9,955.1 1089.9,955.1 H1106.4 Q1114.4,955.1 1114.4,963.1 V1038.5 Z" fill="#58bf99"/><path d="M1181.0,1038.5 V963.1 Q1181.0,955.1 1189.0,955.1 H1205.5 Q1213.5,955.1 1213.5,963.1 V1038.5 Z" fill="#58bf99"/><path d="M1379.3,1038.5 V963.1 Q1379.3,955.1 1387.3,955.1 H1403.8 Q1411.8,955.1 1411.8,963.1 V1038.5 Z" fill="#58bf99"/><path d="M1577.6,1038.5 V796.3 Q1577.6,788.3 1585.6,788.3 H1602.1 Q1610.1,788.3 1610.1,796.3 V1038.5 Z" fill="#58bf99"/><line x1="335" y1="1038.5" x2="1822" y2="1038.5" stroke="#6e7079" stroke-width="1.2"/><line x1="335.0" y1="1038.5" x2="335.0" y2="1044" stroke="#6e7079" stroke-width="1"/><line x1="434.1" y1="1038.5" x2="434.1" y2="1044" stroke="#6e7079" stroke-width="1"/><line x1="533.3" y1="1038.5" x2="533.3" y2="1044" stroke="#6e7079" stroke-width="1"/><line x1="632.4" y1="1038.5" x2="632.4" y2="1044" stroke="#6e7079" stroke-width="1"/><line x1="731.5" y1="1038.5" x2="731.5" y2="1044" stroke="#6e7079" stroke-width="1"/><line x1="830.6" y1="1038.5" x2="830.6" y2="1044" stroke="#6e7079" stroke-width="1"/><line x1="929.8" y1="1038.5" x2="929.8" y2="1044" stroke="#6e7079" stroke-width="1"/><line x1="1028.9" y1="1038.5" x2="1028.9" y2="1044" stroke="#6e7079" stroke-width="1"/><line x1="1128.0" y1="1038.5" x2="1128.0" y2="1044" stroke="#6e7079" stroke-width="1"/><line x1="1227.2" y1="1038.5" x2="1227.2" y2="1044" stroke="#6e7079" stroke-width="1"/><line x1="1326.3" y1="1038.5" x2="1326.3" y2="1044" stroke="#6e7079" stroke-width="1"/><line x1="1425.4" y1="1038.5" x2="1425.4" y2="1044" stroke="#6e7079" stroke-width="1"/><line x1="1524.6" y1="1038.5" x2="1524.6" y2="1044" stroke="#6e7079" stroke-width="1"/><line x1="1623.7" y1="1038.5" x2="1623.7" y2="1044" stroke="#6e7079" stroke-width="1"/><line x1="1722.8" y1="1038.5" x2="1722.8" y2="1044" stroke="#6e7079" stroke-width="1"/><line x1="1821.9" y1="1038.5" x2="1821.9" y2="1044" stroke="#6e7079" stroke-width="1"/><text x="384.6" y="1055" text-anchor="middle" font-size="12.5" fill="#6e7079" font-family="Liberation Sans">11-08</text><text x="483.7" y="1055" text-anchor="middle" font-size="12.5" fill="#6e7079" font-family="Liberation Sans">11-09</text><text x="582.8" y="1055" text-anchor="middle" font-size="12.5" fill="#6e7079" font-family="Liberation Sans">11-10</text><text x="682.0" y="1055" text-anchor="middle" font-size="12.5" fill="#6e7079" font-family="Liberation Sans">11-11</text><text x="781.1" y="1055" text-anchor="middle" font-size="12.5" fill="#6e7079" font-family="Liberation Sans">11-12</text><text x="880.2" y="1055" text-anchor="middle" font-size="12.5" fill="#6e7079" font-family="Liberation Sans">11-13</text><text x="979.3" y="1055" text-anchor="middle" font-size="12.5" fill="#6e7079" font-family="Liberation Sans">11-14</text><text x="1078.5" y="1055" text-anchor="middle" font-size="12.5" fill="#6e7079" font-family="Liberation Sans">11-15</text><text x="1177.6" y="1055" text-anchor="middle" font-size="12.5" fill="#6e7079" font-family="Liberation Sans">11-16</text><text x="1276.7" y="1055" text-anchor="middle" font-size="12.5" fill="#6e7079" font-family="Liberation Sans">11-17</text><text x="1375.9" y="1055" text-anchor="middle" font-size="12.5" fill="#6e7079" font-family="Liberation Sans">11-18</text><text x="1475.0" y="1055" text-anchor="middle" font-size="12.5" fill="#6e7079" font-family="Liberation Sans">11-19</text><text x="1574.1" y="1055" text-anchor="middle" font-size="12.5" fill="#6e7079" font-family="Liberation Sans">11-20</text><text x="1673.3" y="1055" text-anchor="middle" font-size="12.5" fill="#6e7079" font-family="Liberation Sans">11-21</text><text x="1772.4" y="1055" text-anchor="middle" font-size="12.5" fill="#6e7079" font-family="Liberation Sans">11-22</text></svg>
<div class="card" style="left:1864px;top:340px;width:676px;height:443px"></div>
<div class="abs" style="left:1983px;top:392px;line-height:28px;font-size:20px;color:#555a63;white-space:nowrap">泊位使用率</div>
<div class="abs" style="left:2321px;top:392px;line-height:28px;font-size:20px;color:#555a63;white-space:nowrap">泊位周转率</div>
<svg class="abs" style="left:1864px;top:340px" width="676" height="443" viewBox="1864 340 676 443"><g transform="translate(0.7 0)"><path d="M2032.60 435.40 A51.50 51.50 0 1 1 2026.11 435.81 L2028.44 454.16 A33.00 33.00 0 1 0 2032.60 453.90 Z" fill="#4ba3ea" stroke="#fff" stroke-width="1"/><path d="M2026.11 435.81 A51.50 51.50 0 0 1 2032.59 435.40 L2032.59 453.90 A33.00 33.00 0 0 0 2028.44 454.16 Z" fill="#5bbf98" stroke="#fff" stroke-width="1"/></g><text x="2033.3" y="489.9" text-anchor="middle" font-size="12" fill="#555" font-family="Liberation Sans">97.99%</text><circle cx="2370.7" cy="486.9" r="42.25" fill="none" stroke="#908df6" stroke-width="18.5"/><text x="2370.7" y="489.9" text-anchor="middle" font-size="12" fill="#555" font-family="Liberation Sans">99.63%</text><line x1="1864" y1="660.5" x2="2540" y2="660.5" stroke="#ebeef3" stroke-width="1"/><line x1="1864" y1="720.5" x2="2540" y2="720.5" stroke="#ebeef3" stroke-width="1"/></svg>
<div class="abs" style="left:1884px;top:617.4px;line-height:28px;font-size:20px;color:#555a63;white-space:nowrap">今日进场车辆</div>
<div class="abs" style="left:2261px;width:200px;text-align:center;top:617.4px;line-height:28px;font-size:20px;color:#3f4a5c;white-space:nowrap"><b>122</b>辆</div>
<div class="abs" style="left:1884px;top:678px;line-height:28px;font-size:20px;color:#555a63;white-space:nowrap">今日出场车辆</div>
<div class="abs" style="left:2261px;width:200px;text-align:center;top:678px;line-height:28px;font-size:20px;color:#3f4a5c;white-space:nowrap"><b>188</b>辆</div>
<div class="abs" style="left:1884px;top:738.3px;line-height:28px;font-size:20px;color:#555a63;white-space:nowrap">今日在场车辆</div>
<div class="abs" style="left:2261px;width:200px;text-align:center;top:738.3px;line-height:28px;font-size:20px;color:#3f4a5c;white-space:nowrap"><b>10142</b>辆</div>
<div class="card" style="left:1864px;top:804px;width:676px;height:469px;overflow:hidden">
<div class="abs" style="left:14px;top:9px;line-height:34px;font-size:24px;color:#555a63;white-space:nowrap">设备状态</div>
<svg class="abs" style="left:33px;top:69.8px" width="34" height="34" viewBox="0 0 34 34"><circle cx="17" cy="17" r="16.6" fill="#344568"/><g fill="none" stroke="#fff" stroke-width="2.1" stroke-linecap="round"><path d="M7.6 15.2A11.7 11.7 0 0 1 26.6 15.2"/><path d="M10.6 18.2A7.4 7.4 0 0 1 23.8 18.2"/><path d="M13.6 20.8A4.2 4.2 0 0 1 21 20.8"/></g><circle cx="17.3" cy="24" r="1.3" fill="#fff"/></svg>
<div class="abs" style="left:81px;top:70.8px;line-height:28px;font-size:20px;color:#555a63;white-space:nowrap">1<span style="display:inline-block;margin-left:6px;padding:0 8px;height:23px;line-height:23px;border-radius:7px;background:#f5f6f8;color:#409ed9;font-size:17px;vertical-align:2px">识别相机</span></div>
<div class="abs" style="left:572px;top:70.8px;line-height:28px;font-size:20px;color:#e0584f;white-space:nowrap">离线</div>
<div class="abs" style="left:12px;top:123.8px;width:632px;height:1px;background:#eef0f4"></div>
<svg class="abs" style="left:33px;top:143.5px" width="34" height="34" viewBox="0 0 34 34"><circle cx="17" cy="17" r="16.6" fill="#344568"/><g fill="none" stroke="#fff" stroke-width="2.1" stroke-linecap="round"><path d="M7.6 15.2A11.7 11.7 0 0 1 26.6 15.2"/><path d="M10.6 18.2A7.4 7.4 0 0 1 23.8 18.2"/><path d="M13.6 20.8A4.2 4.2 0 0 1 21 20.8"/></g><circle cx="17.3" cy="24" r="1.3" fill="#fff"/></svg>
<div class="abs" style="left:81px;top:144.5px;line-height:28px;font-size:20px;color:#555a63;white-space:nowrap">出口<span style="display:inline-block;margin-left:6px;padding:0 8px;height:23px;line-height:23px;border-radius:7px;background:#f5f6f8;color:#409ed9;font-size:17px;vertical-align:2px">识别相机</span></div>
<div class="abs" style="left:572px;top:144.5px;line-height:28px;font-size:20px;color:#e0584f;white-space:nowrap">离线</div>
<div class="abs" style="left:12px;top:197.5px;width:632px;height:1px;background:#eef0f4"></div>
<svg class="abs" style="left:33px;top:217.2px" width="34" height="34" viewBox="0 0 34 34"><circle cx="17" cy="17" r="16.6" fill="#344568"/><g fill="none" stroke="#fff" stroke-width="2.1" stroke-linecap="round"><path d="M7.6 15.2A11.7 11.7 0 0 1 26.6 15.2"/><path d="M10.6 18.2A7.4 7.4 0 0 1 23.8 18.2"/><path d="M13.6 20.8A4.2 4.2 0 0 1 21 20.8"/></g><circle cx="17.3" cy="24" r="1.3" fill="#fff"/></svg>
<div class="abs" style="left:81px;top:218.2px;line-height:28px;font-size:20px;color:#555a63;white-space:nowrap">北门进<span style="display:inline-block;margin-left:6px;padding:0 8px;height:23px;line-height:23px;border-radius:7px;background:#f5f6f8;color:#409ed9;font-size:17px;vertical-align:2px">识别相机</span></div>
<div class="abs" style="left:572px;top:218.2px;line-height:28px;font-size:20px;color:#3196d5;white-space:nowrap">在线</div>
<div class="abs" style="left:12px;top:271.2px;width:632px;height:1px;background:#eef0f4"></div>
<svg class="abs" style="left:33px;top:290.9px" width="34" height="34" viewBox="0 0 34 34"><circle cx="17" cy="17" r="16.6" fill="#344568"/><g fill="none" stroke="#fff" stroke-width="2.1" stroke-linecap="round"><path d="M7.6 15.2A11.7 11.7 0 0 1 26.6 15.2"/><path d="M10.6 18.2A7.4 7.4 0 0 1 23.8 18.2"/><path d="M13.6 20.8A4.2 4.2 0 0 1 21 20.8"/></g><circle cx="17.3" cy="24" r="1.3" fill="#fff"/></svg>
<div class="abs" style="left:81px;top:291.9px;line-height:28px;font-size:20px;color:#555a63;white-space:nowrap">入口<span style="display:inline-block;margin-left:6px;padding:0 8px;height:23px;line-height:23px;border-radius:7px;background:#f5f6f8;color:#409ed9;font-size:17px;vertical-align:2px">识别相机</span></div>
<div class="abs" style="left:572px;top:291.9px;line-height:28px;font-size:20px;color:#3196d5;white-space:nowrap">在线</div>
<div class="abs" style="left:12px;top:344.9px;width:632px;height:1px;background:#eef0f4"></div>
<svg class="abs" style="left:33px;top:364.6px" width="34" height="34" viewBox="0 0 34 34"><circle cx="17" cy="17" r="16.6" fill="#344568"/><g fill="none" stroke="#fff" stroke-width="2.1" stroke-linecap="round"><path d="M7.6 15.2A11.7 11.7 0 0 1 26.6 15.2"/><path d="M10.6 18.2A7.4 7.4 0 0 1 23.8 18.2"/><path d="M13.6 20.8A4.2 4.2 0 0 1 21 20.8"/></g><circle cx="17.3" cy="24" r="1.3" fill="#fff"/></svg>
<div class="abs" style="left:81px;top:365.6px;line-height:28px;font-size:20px;color:#555a63;white-space:nowrap">出口<span style="display:inline-block;margin-left:6px;padding:0 8px;height:23px;line-height:23px;border-radius:7px;background:#f5f6f8;color:#409ed9;font-size:17px;vertical-align:2px">识别相机</span></div>
<div class="abs" style="left:572px;top:365.6px;line-height:28px;font-size:20px;color:#3196d5;white-space:nowrap">在线</div>
<div class="abs" style="left:12px;top:418.6px;width:632px;height:1px;background:#eef0f4"></div>
<svg class="abs" style="left:33px;top:438.3px" width="34" height="34" viewBox="0 0 34 34"><circle cx="17" cy="17" r="16.6" fill="#344568"/><g fill="none" stroke="#fff" stroke-width="2.1" stroke-linecap="round"><path d="M7.6 15.2A11.7 11.7 0 0 1 26.6 15.2"/><path d="M10.6 18.2A7.4 7.4 0 0 1 23.8 18.2"/><path d="M13.6 20.8A4.2 4.2 0 0 1 21 20.8"/></g><circle cx="17.3" cy="24" r="1.3" fill="#fff"/></svg>
<div class="abs" style="left:81px;top:439.3px;line-height:28px;font-size:20px;color:#555a63;white-space:nowrap">南门进<span style="display:inline-block;margin-left:6px;padding:0 8px;height:23px;line-height:23px;border-radius:7px;background:#f5f6f8;color:#409ed9;font-size:17px;vertical-align:2px">识别相机</span></div>
<div class="abs" style="left:572px;top:439.3px;line-height:28px;font-size:20px;color:#3196d5;white-space:nowrap">在线</div>
<div class="abs" style="left:660px;top:51px;width:16px;height:418px;background:#f1f1f1"></div>
<div class="abs" style="left:661px;top:67px;width:13.5px;height:218px;background:#c1c1c1"></div>
<svg class="abs" style="left:662px;top:55px" width="12" height="8" viewBox="0 0 12 8"><path d="M2.5 6.5H9.5L6 2.5Z" fill="#a3a3a3"/></svg>
<svg class="abs" style="left:662px;top:455px" width="12" height="8" viewBox="0 0 12 8"><path d="M2.5 1.5H9.5L6 5.5Z" fill="#505050"/></svg>
</div>
<div class="abs" style="left:2557px;top:440px;width:8px;height:100px;border-radius:4px 0 0 4px;background:linear-gradient(#1762f2 0,#1762f2 22%,#4a88f0 24%,#4b89ef 100%)"></div>
</body></html>
